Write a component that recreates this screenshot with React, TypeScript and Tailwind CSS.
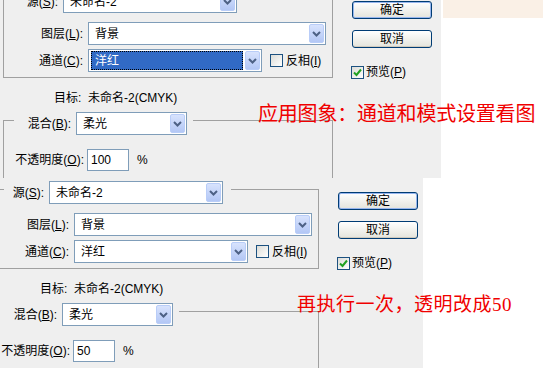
import type { ReactNode } from 'react';

const Key = ({ k }: { k: string }) => <span className="underline underline-offset-1">{k}</span>;

const Label = ({ text, k }: { text: string; k: string }) => (
  <span className="whitespace-nowrap">
    {text}(<Key k={k} />):
  </span>
);

const Chevron = () => (
  <svg width="9" height="6" viewBox="0 0 9 6">
    <path d="M1 1l3.5 3.5L8 1" fill="none" stroke="#4d6185" strokeWidth="2" />
  </svg>
);

const Select = ({ value, className, focused = false }: { value: string; className: string; focused?: boolean }) => (
  <div className={`flex h-[23px] shrink-0 border border-[#7f9db9] bg-white p-[1px] ${className}`}>
    <div className="flex flex-1 items-center">
      {focused ? (
        <div className="mr-[2px] ml-[1px] flex h-full flex-1 items-center border border-dotted border-black bg-[#316ac5] pl-[3px] text-white">
          {value}
        </div>
      ) : (
        <span className="pl-[5px]">{value}</span>
      )}
    </div>
    <div className="flex w-[15px] items-center justify-center rounded-[2px] border border-[#b9cdf8] bg-linear-to-b from-[#d8e3fd] to-[#b3c7f5]">
      <Chevron />
    </div>
  </div>
);

const Check = ({ checked = false }: { checked?: boolean }) => (
  <div className="flex h-[13px] w-[13px] shrink-0 items-center justify-center border border-[#1c5180] bg-linear-to-br from-[#dcdcd7] to-white">
    {checked && (
      <svg width="9" height="9" viewBox="0 0 9 9">
        <path d="M1 4.5l2.5 2.5L8 1.5" fill="none" stroke="#21a121" strokeWidth="2" />
      </svg>
    )}
  </div>
);

const Btn = ({ children, primary = false }: { children: ReactNode; primary?: boolean }) => (
  <div
    className={`flex h-[18px] w-[80px] items-center justify-center rounded-[3px] border border-[#003c74] bg-linear-to-b from-white to-[#e4e4dc] leading-none ${
      primary ? 'shadow-[inset_0_0_0_1px_#97b6ee]' : 'shadow-[inset_0_-1px_0_#d0cabd]'
    }`}
  >
    {children}
  </div>
);

const Dialog = ({ opacity, focused }: { opacity: string; focused: boolean }) => (
  <div className="flex w-[445px] bg-[#efefef] font-['Liberation_Sans','Noto_Sans_CJK_SC',sans-serif] text-[12px] leading-[14px] text-black">
    <div className="ml-[3px] flex w-[330px] shrink-0 flex-col">
      {/* 源 / 图层 / 通道 group */}
      <div className="mt-[18px] h-[80px] border-x border-b border-[#a0a0a0]">
        <div className="mt-[-8px] flex h-[23px]">
          <div className="mt-[8px] w-[14px] self-start border-t border-[#a0a0a0]" />
          <div className="flex w-[40px] items-center justify-end">
            <Label text="源" k="S" />
          </div>
          <Select value="未命名-2" className="ml-[5px] w-[174px]" />
          <div className="mt-[8px] ml-[8px] flex-1 self-start border-t border-[#a0a0a0]" />
        </div>
        <div className="mt-[9px] flex h-[23px] items-center">
          <div className="w-[79px] text-right">
            <Label text="图层" k="L" />
          </div>
          <Select value="背景" className="ml-[5px] w-[238px]" />
        </div>
        <div className="mt-[4px] flex h-[23px] items-center">
          <div className="w-[79px] text-right">
            <Label text="通道" k="C" />
          </div>
          <Select value="洋红" focused={focused} className="ml-[5px] w-[174px]" />
          <div className="ml-[8px]">
            <Check />
          </div>
          <span className="ml-[3px] whitespace-nowrap">
            反相(<Key k="I" />)
          </span>
        </div>
      </div>

      <div className="mt-[13px] pl-[51px] whitespace-nowrap">目标:&nbsp; 未命名-2(CMYK)</div>

      {/* 混合 group */}
      <div className="mt-[15px] h-[80px] border-x border-[#a0a0a0]">
        <div className="mt-[-8px] flex h-[23px]">
          <div className="mt-[8px] w-[10px] self-start border-t border-[#a0a0a0]" />
          <div className="flex w-[57px] items-center justify-end">
            <Label text="混合" k="B" />
          </div>
          <Select value="柔光" className="ml-[5px] w-[111px]" />
          <div className="mt-[8px] ml-[6px] flex-1 self-start border-t border-[#a0a0a0]" />
        </div>
        <div className="mt-[14px] flex h-[22px] items-center">
          <div className="w-[80px] text-right">
            <Label text="不透明度" k="O" />
          </div>
          <div className="ml-[3px] flex h-[22px] w-[42px] items-center border border-[#7f9db9] bg-white pl-[3px]">{opacity}</div>
          <span className="ml-[8px]">%</span>
        </div>
      </div>
    </div>

    <div className="ml-[19px] flex flex-col">
      <div className="mt-[21px]">
        <Btn primary>确定</Btn>
      </div>
      <div className="mt-[11px]">
        <Btn>取消</Btn>
      </div>
      <div className="mt-[17px] ml-[-1px] flex items-center gap-[2px]">
        <Check checked />
        <span className="whitespace-nowrap">
          预览(<Key k="P" />)
        </span>
      </div>
    </div>
  </div>
);

const App = () => {
  return (
    <div className="relative h-[368px] w-[543px] overflow-hidden bg-white">
      <div className="flex">
        <div className="h-[178px] w-[441px] shrink-0 overflow-hidden">
          <div className="mt-[-20px]">
            <Dialog opacity="100" focused />
          </div>
        </div>
        <div className="flex flex-1 flex-col">
          <div className="ml-[2px] h-[18px] bg-[#faf0e6]" />
        </div>
      </div>
      <div className="h-[190px] w-[423px] overflow-hidden">
        <div className="mt-[-7px] ml-[-14px]">
          <Dialog opacity="50" focused={false} />
        </div>
      </div>

      <div className="absolute top-[104px] left-[258px] font-['Liberation_Serif','Noto_Sans_CJK_SC',serif] text-[20px] leading-[20px] tracking-[-0.2px] whitespace-nowrap text-[#f00000]">
        应用图象：通道和模式设置看图
      </div>
      <div className="absolute top-[295px] left-[297px] font-['Liberation_Serif','Noto_Sans_CJK_SC',serif] text-[19px] leading-[19px] tracking-[0.5px] whitespace-nowrap text-[#f00000]">
        再执行一次，透明改成50
      </div>
    </div>
  );
};

export default App;
